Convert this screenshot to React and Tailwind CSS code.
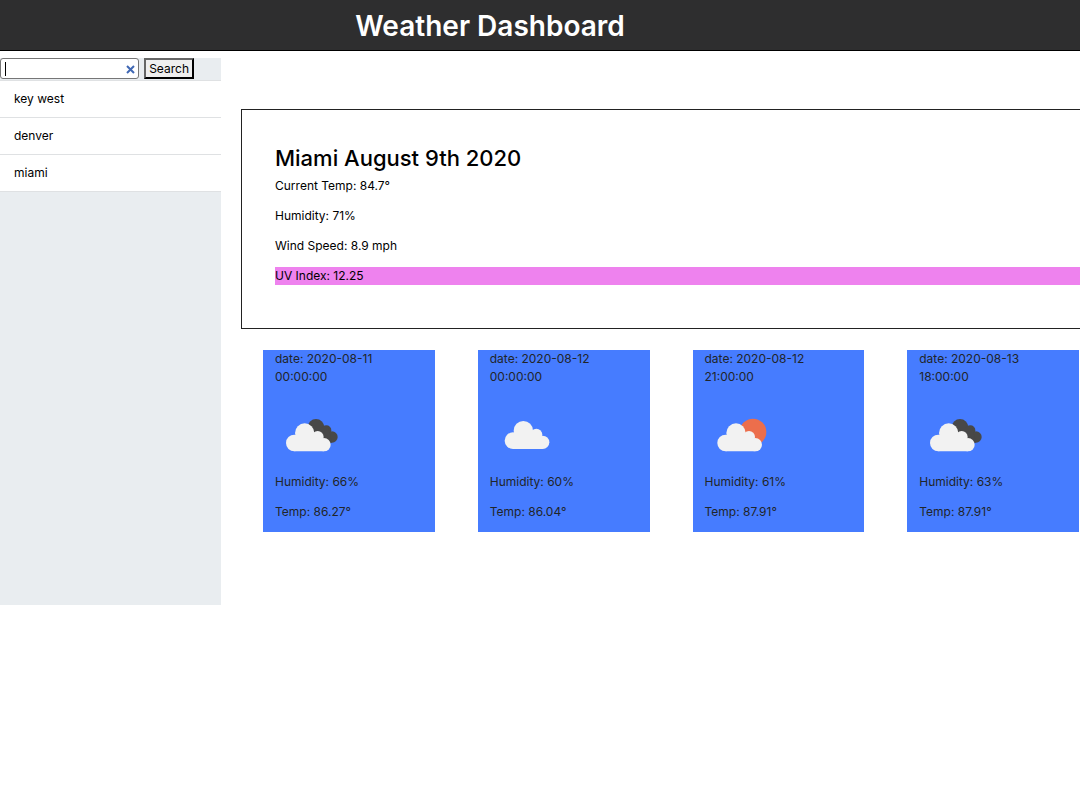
import { useState } from 'react';

const cities = ['key west', 'denver', 'miami'];

const forecast = [
  { date: '2020-08-11', time: '00:00:00', icon: 'broken', humidity: '66%', temp: '86.27°' },
  { date: '2020-08-12', time: '00:00:00', icon: 'cloud', humidity: '60%', temp: '86.04°' },
  { date: '2020-08-12', time: '21:00:00', icon: 'sun', humidity: '61%', temp: '87.91°' },
  { date: '2020-08-13', time: '18:00:00', icon: 'broken', humidity: '63%', temp: '87.91°' },
];

const labels = { broken: 'Broken clouds', cloud: 'Cloudy', sun: 'Partly sunny' };
const shifts = { broken: 'translate(0 0)', cloud: 'translate(11 -7)', sun: 'translate(4 0)' };

function WeatherIcon({ kind }) {
  return (
    <svg viewBox="0 0 192 192" className="block size-16" role="img" aria-label={labels[kind]}>
      {kind === 'broken' && (
        <g fill="#484848">
          <circle cx="123" cy="73" r="25" />
          <circle cx="154" cy="82" r="15" />
          <circle cx="171" cy="102" r="17" />
          <path d="M110 75h50l11 44h-40z" />
        </g>
      )}
      {kind === 'sun' && <circle cx="144" cy="87" r="40" fill="#ec6e4c" />}
      <g fill="#f2f2f2" transform={shifts[kind]}>
        <circle cx="58" cy="120" r="25" />
        <circle cx="89" cy="90" r="29" />
        <circle cx="128" cy="102" r="18" />
        <circle cx="147" cy="125" r="20" />
        <path d="M58 145V100h60l29 10v35z" />
      </g>
    </svg>
  );
}

export default function App() {
  const [query, setQuery] = useState('');
  return (
    <div className="min-h-screen overflow-x-hidden bg-white font-['Inter',sans-serif] text-[12px] leading-[18px] text-black">
      <header className="border-b border-black bg-[#2e2e2f] pt-0.5 pr-[100px] text-center text-white">
        <h1 className="text-[28px] leading-12 font-semibold">Weather Dashboard</h1>
      </header>
      <div className="flex items-start pt-[7px]">
        <aside className="min-h-[547px] w-[221px] shrink-0 bg-[#e9edf0]">
          <form className="flex h-[22px] gap-[5px] pr-[27px]" onSubmit={(e) => e.preventDefault()}>
            <div className="relative min-w-0 flex-1">
              <input
                type="text"
                aria-label="City"
                value={query}
                onChange={(e) => setQuery(e.target.value)}
                className="block h-[21px] w-full rounded-[3px] border border-[#767676] bg-white pr-5 pl-1 outline-none"
              />
              <span className="absolute top-1 left-[5px] h-[14px] w-px bg-black" />
              <button
                type="button"
                aria-label="Clear"
                onClick={() => setQuery('')}
                className="absolute top-[7px] right-1 size-[9px]"
              >
                <svg viewBox="0 0 9 9" className="block size-[9px]" stroke="#4068b4" strokeWidth="2">
                  <path d="M1 1l7 7M8 1l-7 7" />
                </svg>
              </button>
            </div>
            <button
              type="submit"
              className="h-[21px] border-2 border-t-[#666] border-r-black border-b-black border-l-[#666] bg-[#efefef] px-[3px] leading-[17px]"
            >
              Search
            </button>
          </form>
          <ul className="border-t border-[#dfe1e3] bg-white">
            {cities.map((city) => (
              <li key={city} className="border-b border-[#dfe1e3]">
                <a href={'#' + city.replace(' ', '-')} className="block px-[14px] py-[9px] leading-[18px]">
                  {city}
                </a>
              </li>
            ))}
          </ul>
        </aside>
        <main className="min-w-0 flex-1 pt-[51px] pl-5">
          <section className="border-y border-l border-[#222] pt-8 pb-[43px] pl-[33px]">
            <h2 className="mb-0.5 text-[22px] leading-[33px] font-medium">Miami August 9th 2020</h2>
            <div className="flex flex-col gap-3">
              <p>Current Temp: 84.7°</p>
              <p>Humidity: 71%</p>
              <p>Wind Speed: 8.9 mph</p>
              <p className="bg-[#ee82ee]">UV Index: 12.25</p>
            </div>
          </section>
          <section className="grid grid-cols-4 gap-[43px] pt-[21px] pr-px pl-[22px]">
            {forecast.map((day) => (
              <article key={day.date + day.time} className="bg-[#467cff] px-3 pb-[11px] text-[#212529]">
                <p>
                  {`date: ${day.date}`}
                  <br />
                  {day.time}
                </p>
                <div className="pt-[17px] pb-1.5">
                  <WeatherIcon kind={day.icon} />
                </div>
                <p className="mb-3">{`Humidity: ${day.humidity}`}</p>
                <p>{`Temp: ${day.temp}`}</p>
              </article>
            ))}
          </section>
        </main>
      </div>
    </div>
  );
}
